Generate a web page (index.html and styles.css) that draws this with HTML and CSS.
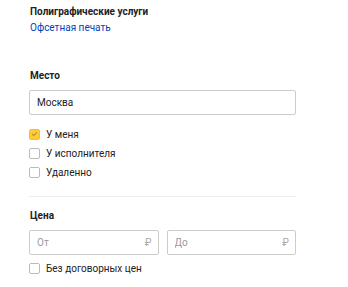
FILE: index.html
```html
<!DOCTYPE html>
<html lang="ru">
<head>
  <meta charset="UTF-8" />
  <title>Фильтры</title>
  <link rel="stylesheet" href="styles.css">
</head>
<body>

<div class="filters">
  <div class="section">
    <div class="title">Полиграфические услуги</div>
    <a class="link" href="#">Офсетная печать</a>
  </div>

  <div class="section place">
    <div class="title">Место</div>
    <div class="field wide">
      <input type="text" value="Москва" />
    </div>
    <ul class="checks">
      <li><span class="box checked"></span>У меня</li>
      <li><span class="box"></span>У исполнителя</li>
      <li><span class="box"></span>Удаленно</li>
    </ul>
  </div>

  <hr class="divider" />

  <div class="section price">
    <div class="title">Цена</div>
    <div class="price-row">
      <div class="field">
        <input type="text" placeholder="От" />
        <span class="cur">₽</span>
      </div>
      <div class="field">
        <input type="text" placeholder="До" />
        <span class="cur">₽</span>
      </div>
    </div>
    <ul class="checks">
      <li><span class="box"></span>Без договорных цен</li>
    </ul>
  </div>
</div>

</body>
</html>
```

FILE: styles.css
```css
body {
  margin: 0;
  background: #fff;
  font-family: Roboto, 'Noto Sans', sans-serif;
  font-size: 10px;
  color: #222;
}
.filters {
  width: 267px;
  padding: 5px 0 0 29px;
}
.title {
  font-weight: 700;
  font-size: 10px;
  line-height: 14px;
  margin-left: 1px;
}
.link {
  display: block;
  margin-top: 2px;
  margin-left: 1px;
  color: #04b;
  text-decoration: none;
  line-height: 14px;
}
.place {
  margin-top: 34px;
}
.place .title {
  margin-bottom: 7px;
}
.field {
  position: relative;
  height: 25px;
  border: 1px solid #ccc;
  border-radius: 2px;
  box-sizing: border-box;
}
.field input {
  width: 100%;
  height: 100%;
  box-sizing: border-box;
  border: none;
  background: transparent;
  padding: 0 20px 0 7px;
  font-family: inherit;
  font-size: 10px;
  color: #222;
  outline: none;
}
.field input::placeholder {
  color: #999;
}
.cur {
  position: absolute;
  right: 6px;
  top: 6px;
  color: #aaa;
  font-size: 10px;
}
.checks {
  list-style: none;
  margin: 10px 0 0;
  padding: 0;
}
.checks li {
  display: flex;
  align-items: center;
  height: 19px;
  line-height: 19px;
}
.box {
  width: 9px;
  height: 9px;
  border: 1px solid #bbb;
  border-radius: 2px;
  margin-right: 6px;
  flex: none;
  position: relative;
}
.box.checked {
  background: #fc3;
  border-color: #f0c030;
}
.box.checked::after {
  content: "";
  position: absolute;
  left: 3px;
  top: 1px;
  width: 2px;
  height: 4px;
  border: solid #b8902a;
  border-width: 0 1px 1px 0;
  transform: rotate(45deg);
}
.divider {
  border: none;
  border-top: 1px solid #eee;
  margin: 14px 0 0;
}
.price {
  margin-top: 12px;
}
.price .title {
  margin-bottom: 7px;
}
.price-row {
  display: grid;
  grid-template-columns: 1fr 1fr;
  gap: 8px;
}
.price .checks {
  margin-top: 4px;
}
```
